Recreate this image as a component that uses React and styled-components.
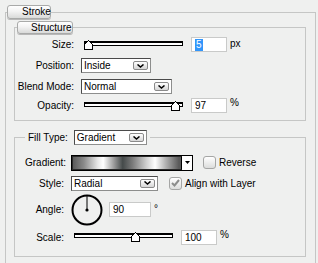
import React from "react";
import styled, { createGlobalStyle } from "styled-components";

const GlobalStyle = createGlobalStyle`
  html, body {
    margin: 0;
    padding: 0;
    overflow: hidden;
    background: #eff0ef;
  }
  body {
    font-family: "Liberation Sans", Arial, sans-serif;
    font-size: 10px;
    color: #000;
  }
`;

const Outer = styled.fieldset`
  margin: 5px 2px 0 5px;
  padding: 0 9px 8px 1px;
  border: 1px solid #c5c6c5;
  min-width: 0;
`;

const Group = styled.fieldset`
  margin: ${p => p.$top || 0}px 0 0 7px;
  padding: ${p => p.$pad};
  border: 1px solid #c5c6c5;
  min-width: 0;
`;

const Tab = styled.legend`
  height: ${p => p.$h}px;
  box-sizing: border-box;
  padding: 0 0 0 ${p => p.$indent}px;
  width: ${p => p.$w}px;
  line-height: ${p => p.$h - 2}px;
  border: 1px solid #a9aaa9;
  border-radius: 3px;
  background: linear-gradient(#ffffff, #f2f2f2 45%, #d9dad9);
  box-shadow: 0 1px 0 #b8b8b8;
  font-size: 10px;
  white-space: nowrap;
`;

const FillLegend = styled.legend`
  display: flex;
  align-items: center;
  gap: 6px;
  padding: 0 3px;
  height: 15px;
`;

const Row = styled.div`
  display: flex;
  align-items: center;
  height: ${p => p.$h}px;
`;

const Label = styled.span`
  width: ${p => p.$w}px;
  text-align: right;
  margin-right: 7px;
  flex: none;
  white-space: nowrap;
`;

const SelectBox = styled.div`
  box-sizing: border-box;
  width: ${p => p.$w}px;
  height: 15px;
  display: flex;
  align-items: center;
  justify-content: space-between;
  padding: 0 2px 0 2px;
  background: #fff;
  border: 1px solid #8d8e8d;
  border-top-color: #4a4a4a;
  border-left-color: #4a4a4a;
`;

const ArrowButton = styled.span`
  box-sizing: border-box;
  width: 15px;
  height: 9px;
  display: flex;
  align-items: center;
  justify-content: center;
  border: 1px solid #8a8a8a;
  border-radius: 2px;
  background: linear-gradient(#ffffff, #d6d6d6);
`;

const TextInput = styled.div`
  box-sizing: border-box;
  width: ${p => p.$w}px;
  height: 15px;
  margin-left: ${p => p.$gap}px;
  padding-left: 3px;
  display: flex;
  align-items: center;
  background: #fff;
  border: 1px solid #c9cac9;
`;

const Highlight = styled.span`
  background: #3296fa;
  color: #fff;
  padding: 0 1px;
  line-height: 12px;
`;

const Unit = styled.span`
  margin-left: 3px;
  align-self: flex-start;
  margin-top: ${p => p.$mt || 0}px;
`;

const SliderWrap = styled.div`
  position: relative;
  width: ${p => p.$w}px;
  height: 10px;
  margin-left: 3px;
  flex: none;
`;

const Track = styled.div`
  position: absolute;
  left: 0;
  right: 0;
  top: 1px;
  height: 5px;
  box-sizing: border-box;
  border: 1px solid #000;
  border-top-width: 2px;
  background: #fff;
`;

const Thumb = styled.svg`
  position: absolute;
  top: 0;
  display: block;
`;

const Picker = styled.div`
  box-sizing: border-box;
  width: 122px;
  height: 16px;
  display: flex;
  border: 1px solid #000;
  background: #fff;
`;

const Swatch = styled.div`
  flex: 1;
  border: 1px solid #2a2a2a;
  border-right: 1px solid #000;
  background: linear-gradient(
    90deg,
    #5a5a5a 0%,
    #8a8a8a 10%,
    #e8e8e8 23%,
    #ffffff 28%,
    #9a9a9a 38%,
    #454a4a 46%,
    #7a7a7a 55%,
    #d0d0d0 68%,
    #ffffff 76%,
    #b0b0b0 86%,
    #5a5a5a 98%
  );
`;

const DropCell = styled.div`
  width: 10px;
  display: flex;
  align-items: center;
  justify-content: center;
`;

const Check = styled.span`
  box-sizing: border-box;
  width: 13px;
  height: 13px;
  margin: 0 3px 0 ${p => p.$gap}px;
  display: flex;
  align-items: center;
  justify-content: center;
  border: 1px solid #a5a6a5;
  border-radius: 3px;
  background: linear-gradient(#ffffff, #dcdddc);
`;

const Dial = styled.svg`
  display: block;
  flex: none;
`;

const Chevron = () => (
  <svg width="7" height="4" viewBox="0 0 7 4">
    <polyline points="0.5,0.5 3.5,3 6.5,0.5" fill="none" stroke="#000" strokeWidth="1.5" />
  </svg>
);

const Select = ({ w, value }) => (
  <SelectBox $w={w}>
    <span>{value}</span>
    <ArrowButton>
      <Chevron />
    </ArrowButton>
  </SelectBox>
);

const Slider = ({ w, pos }) => (
  <SliderWrap $w={w}>
    <Track />
    <Thumb width="10" height="10" viewBox="0 0 10 10" style={{ left: Math.round(pos * (w - 9)) }} shapeRendering="crispEdges">
      <polygon points="4.5,0.5 8.5,4.5 8.5,9.5 0.5,9.5 0.5,4.5" fill="#fff" stroke="#000" strokeWidth="1" />
    </Thumb>
  </SliderWrap>
);

export default function App() {
  return (
    <>
      <GlobalStyle />
      <Outer>
        <Tab $h={14} $w={44} $indent={14}>Stroke</Tab>

        <Group $top={2} $pad="0 0 6px 2px">
          <Tab $h={13} $w={56} $indent={13}>Structure</Tab>
          <Row $h={21}>
            <Label $w={57}>Size:</Label>
            <Slider w={99} pos={0} />
            <TextInput $w={36} $gap={8}>
              <Highlight>5</Highlight>
            </TextInput>
            <Unit $mt={4}>px</Unit>
          </Row>
          <Row $h={21}>
            <Label $w={57}>Position:</Label>
            <Select w={70} value="Inside" />
          </Row>
          <Row $h={21}>
            <Label $w={57}>Blend Mode:</Label>
            <Select w={91} value="Normal" />
          </Row>
          <Row $h={17}>
            <Label $w={57}>Opacity:</Label>
            <Slider w={99} pos={0.97} />
            <TextInput $w={36} $gap={8}>97</TextInput>
            <Unit>%</Unit>
          </Row>
        </Group>

        <Group $top={9} $pad="8px 0 7px 10px">
          <FillLegend>
            <span>Fill Type:</span>
            <Select w={73} value="Gradient" />
          </FillLegend>
          <Row $h={19}>
            <Label $w={39}>Gradient:</Label>
            <Picker>
              <Swatch />
              <DropCell>
                <svg width="5" height="3" viewBox="0 0 5 3">
                  <polygon points="0,0 5,0 2.5,3" fill="#000" />
                </svg>
              </DropCell>
            </Picker>
            <Check $gap={10} />
            <span>Reverse</span>
          </Row>
          <Row $h={22}>
            <Label $w={39}>Style:</Label>
            <Select w={87} value="Radial" />
            <Check $gap={11}>
              <svg width="9" height="8" viewBox="0 0 9 8">
                <polyline points="1,4 3.5,6.5 8,1" fill="none" stroke="#8c8d8c" strokeWidth="2" />
              </svg>
            </Check>
            <span>Align with Layer</span>
          </Row>
          <Row $h={31}>
            <Label $w={39}>Angle:</Label>
            <Dial width="32" height="32" viewBox="0 0 32 32">
              <circle cx="16" cy="16" r="14.5" fill="none" stroke="#000" strokeWidth="2" />
              <line x1="16" y1="16" x2="16" y2="2" stroke="#000" strokeWidth="1" />
              <circle cx="16" cy="16" r="1.6" fill="#000" />
            </Dial>
            <TextInput $w={42} $gap={6}>90</TextInput>
            <Unit $mt={9}>°</Unit>
          </Row>
          <Row $h={24}>
            <Label $w={39}>Scale:</Label>
            <Slider w={99} pos={0.63} />
            <TextInput $w={36} $gap={8}>100</TextInput>
            <Unit $mt={4}>%</Unit>
          </Row>
        </Group>
      </Outer>
    </>
  );
}
